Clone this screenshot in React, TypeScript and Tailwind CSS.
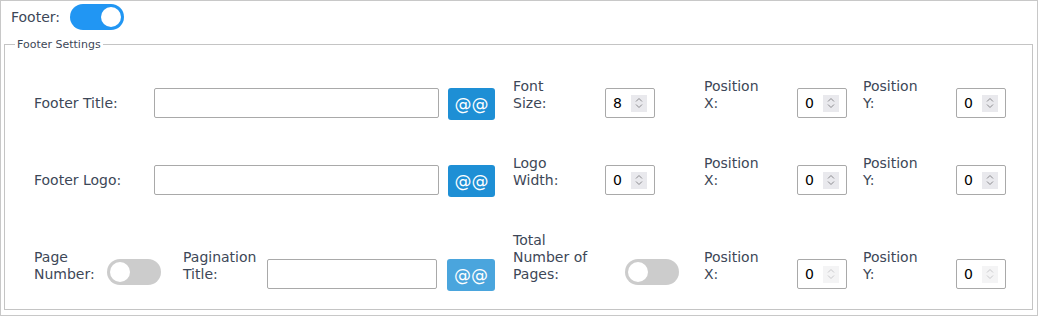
import React from 'react'

// Footer settings panel

const labelCls = 'shrink-0 pb-[8px] text-[14px] leading-[17px] text-[#3d4757]'

function Toggle({ on, className = '' }: { on: boolean; className?: string }) {
  return (
    <span
      className={`flex h-[26px] w-[54px] shrink-0 items-center rounded-full px-[3px] ${
        on ? 'justify-end bg-[#2196f3]' : 'justify-start bg-[#cccccc]'
      } ${className}`}
    >
      <span className="h-[20px] w-[20px] rounded-full bg-white" />
    </span>
  )
}

function TextInput({ width }: { width: string }) {
  return (
    <input
      type="text"
      className={`mb-[2px] h-[30px] shrink-0 rounded-[2px] border border-[#a9a9a9] bg-white px-[6px] text-[14px] outline-none ${width}`}
    />
  )
}

function NumberInput({ value, dim = false }: { value: string; dim?: boolean }) {
  return (
    <div className="mb-[2px] flex h-[30px] w-[50px] shrink-0 items-center rounded-[2px] border border-[#a9a9a9] bg-white pl-[7px] pr-[7px]">
      <input
        readOnly
        value={value}
        className="w-0 min-w-0 flex-1 bg-transparent text-[14px] text-black outline-none"
      />
      <span
        className={`flex h-[17px] w-[16px] items-center justify-center ${
          dim ? 'bg-[#f4f4f5]' : 'bg-[#e9e9ed]'
        }`}
      >
        <svg width="8" height="12" viewBox="0 0 8 12" fill="none">
          <path
            d="M1 4.5 L4 1.5 L7 4.5 M1 7.5 L4 10.5 L7 7.5"
            stroke={dim ? '#c9c9cc' : '#8a8a8e'}
            strokeWidth="1"
          />
        </svg>
      </span>
    </div>
  )
}

function AtButton({ dim = false, className = '' }: { dim?: boolean; className?: string }) {
  return (
    <button
      className={`flex h-[32px] w-[47px] shrink-0 items-center justify-center rounded-[3px] bg-[#1e8fd5] text-[17px] leading-none text-white ${
        dim ? 'opacity-80' : ''
      } ${className}`}
    >
      @@
    </button>
  )
}

function Positions({ dim = false }: { dim?: boolean }) {
  return (
    <>
      <div className={`${labelCls} ml-[49px] w-[60px]`}>Position X:</div>
      <div className="ml-[33px]">
        <NumberInput value="0" dim={dim} />
      </div>
      <div className={`${labelCls} ml-[16px] w-[60px]`}>Position Y:</div>
      <div className="ml-[33px]">
        <NumberInput value="0" dim={dim} />
      </div>
    </>
  )
}

export default function App() {
  return (
    <div
      className="h-[316px] w-[1038px] border border-[#c8c8c8] bg-white pl-[3px] pr-[4px] pt-[3px]"
      style={{ fontFamily: '"DejaVu Sans", "Noto Sans", sans-serif' }}
    >
      {/* header toggle */}
      <div className="flex h-[26px] items-center">
        <span className="ml-[7px] text-[14px] text-[#3d4757]">Footer:</span>
        <Toggle on className="ml-[10px]" />
      </div>

      <fieldset className="mt-[8px] border border-[#c4c4c4] px-[10px]">
        <legend className="px-[2px] text-[11px] leading-[13px] text-[#3d4757]">Footer Settings</legend>

        <div className="flex flex-col gap-[35px] pb-[18px] pl-[19px] pt-[27px]">
          {/* row 1 */}
          <div className="flex items-end">
            <div className={`${labelCls} w-[120px]`}>Footer Title:</div>
            <TextInput width="w-[285px]" />
            <AtButton className="ml-[9px]" />
            <div className={`${labelCls} ml-[18px] w-[66px]`}>Font Size:</div>
            <div className="ml-[26px]">
              <NumberInput value="8" />
            </div>
            <Positions />
          </div>

          {/* row 2 */}
          <div className="flex items-end">
            <div className={`${labelCls} w-[120px]`}>Footer Logo:</div>
            <TextInput width="w-[285px]" />
            <AtButton className="ml-[9px]" />
            <div className={`${labelCls} ml-[18px] w-[66px]`}>Logo Width:</div>
            <div className="ml-[26px]">
              <NumberInput value="0" />
            </div>
            <Positions />
          </div>

          {/* row 3 */}
          <div className="flex items-end">
            <div className={`${labelCls} w-[73px]`}>Page Number:</div>
            <Toggle on={false} className="mb-[6px]" />
            <div className={`${labelCls} ml-[22px] w-[84px]`}>Pagination Title:</div>
            <TextInput width="w-[170px]" />
            <AtButton dim className="ml-[10px] w-[48px]" />
            <div className={`${labelCls} ml-[18px] w-[80px]`}>Total Number of Pages:</div>
            <Toggle on={false} className="mb-[6px] ml-[32px]" />
            <div className={`${labelCls} ml-[25px] w-[60px]`}>Position X:</div>
            <div className="ml-[33px]">
              <NumberInput value="0" dim />
            </div>
            <div className={`${labelCls} ml-[16px] w-[60px]`}>Position Y:</div>
            <div className="ml-[33px]">
              <NumberInput value="0" dim />
            </div>
          </div>
        </div>
      </fieldset>
    </div>
  )
}
